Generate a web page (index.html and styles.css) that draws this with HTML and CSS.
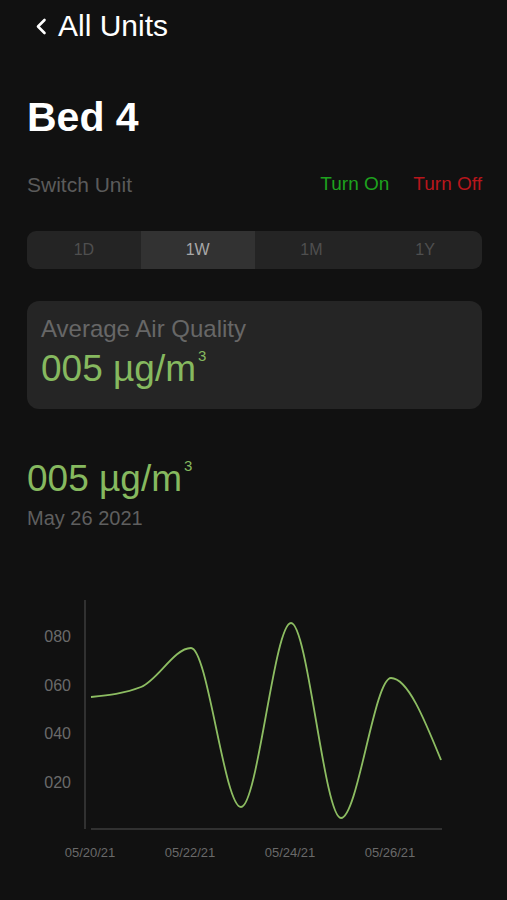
FILE: index.html
```html
<!DOCTYPE html>
<html>
<head>
  <title>Bed 4</title>
  <link rel="stylesheet" href="styles.css">
</head>
<body>
  <div class="page">
    <a class="back" href="#">
      <svg class="chevron" width="12" height="17" viewBox="0 0 12 17">
        <path d="M9.5 2 L3 8.5 L9.5 15" fill="none" stroke="#fff" stroke-width="2.6" stroke-linecap="round" stroke-linejoin="round"/>
      </svg>
      <span>All Units</span>
    </a>

    <h1 class="title">Bed 4</h1>

    <div class="switch-row">
      <span class="switch-label">Switch Unit</span>
      <div class="switch-actions">
        <span class="turn-on">Turn On</span>
        <span class="turn-off">Turn Off</span>
      </div>
    </div>

    <div class="segments">
      <div class="segment">1D</div>
      <div class="segment active">1W</div>
      <div class="segment">1M</div>
      <div class="segment">1Y</div>
    </div>

    <div class="card">
      <div class="card-label">Average Air Quality</div>
      <div class="value">005 µg/m<sup>3</sup></div>
    </div>

    <div class="reading">
      <div class="value">005 µg/m<sup>3</sup></div>
      <div class="date">May 26 2021</div>
    </div>

    <svg class="chart" width="455" height="275" viewBox="0 0 455 275">
      <line x1="58" y1="5" x2="58" y2="234" stroke="#3c3c3c" stroke-width="1.5"/>
      <line x1="64" y1="234" x2="415" y2="234" stroke="#3c3c3c" stroke-width="1.5"/>
      <g class="y-labels" text-anchor="end">
        <text x="44" y="47">080</text>
        <text x="44" y="96">060</text>
        <text x="44" y="144">040</text>
        <text x="44" y="193">020</text>
      </g>
      <g class="x-labels" text-anchor="middle">
        <text x="63" y="262">05/20/21</text>
        <text x="163" y="262">05/22/21</text>
        <text x="263" y="262">05/24/21</text>
        <text x="363" y="262">05/26/21</text>
      </g>
      <path d="M64,102 C80.67,100.33 97.33,98.67 114,92 C130.67,85.33 147.33,53 164,53 C180.67,53 197.33,212 214,212 C230.67,212 247.33,28 264,28 C280.67,28 297.33,223 314,223 C330.67,223 347.33,83 364,83 C380.67,83 397.33,124 414,165"
            fill="none" stroke="#8dbd62" stroke-width="1.8"/>
    </svg>
  </div>
</body>
</html>
```

FILE: styles.css
```css
body {
  margin: 0;
  background-color: #111111;
  font-family: "Liberation Sans", Arial, sans-serif;
  color: #fff;
}
.page {
  padding: 0 25px 0 27px;
  height: 900px;
  box-sizing: border-box;
}
.back {
  display: flex;
  align-items: center;
  gap: 11px;
  padding-top: 11px;
  margin-left: 8px;
  color: #fff;
  text-decoration: none;
  font-size: 30px;
  line-height: 30px;
}
.title {
  margin: 56px 0 0;
  font-size: 41px;
  line-height: 41px;
  font-weight: bold;
}
.switch-row {
  display: flex;
  justify-content: space-between;
  align-items: center;
  margin-top: 35px;
}
.switch-label {
  color: #5b5b5b;
  font-size: 21px;
}
.switch-actions {
  display: flex;
  gap: 24px;
  font-size: 19px;
  margin-top: -3px;
}
.turn-on {
  color: #1ea21e;
}
.turn-off {
  color: #b8161c;
}
.segments {
  display: grid;
  grid-template-columns: repeat(4, 1fr);
  height: 38px;
  margin-top: 34px;
  border-radius: 9px;
  overflow: hidden;
  background-color: #242424;
}
.segment {
  display: flex;
  align-items: center;
  justify-content: center;
  color: #4f4f4f;
  font-size: 16px;
}
.segment.active {
  background-color: #323232;
  color: #a8a8a8;
}
.card {
  margin-top: 32px;
  height: 108px;
  box-sizing: border-box;
  padding: 14px 14px;
  border-radius: 12px;
  background-color: #252525;
}
.card-label {
  color: #676767;
  font-size: 24px;
  line-height: 28px;
}
.value {
  color: #86b95f;
  font-size: 37px;
  line-height: 42px;
}
.value sup {
  font-size: 15px;
  line-height: 15px;
  vertical-align: top;
  position: relative;
  top: 0;
  margin-left: 2px;
}
.card .value {
  margin-top: 5px;
}
.reading {
  margin-top: 49px;
}
.date {
  color: #5f5f5f;
  font-size: 20px;
  margin-top: 7px;
}
.chart {
  display: block;
  margin-top: 65px;
}
.y-labels {
  fill: #6a6a6a;
  font-size: 16px;
}
.x-labels {
  fill: #6a6a6a;
  font-size: 13px;
}
```
